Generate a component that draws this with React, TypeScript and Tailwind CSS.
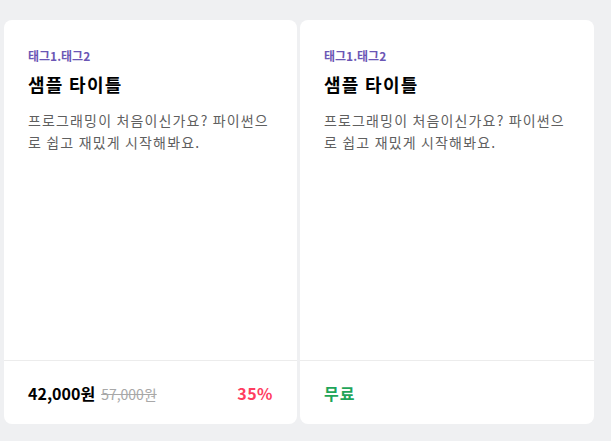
import React from "react";

type Card = {
  tags: string;
  title: string;
  desc: string;
  price?: string;
  original?: string;
  discount?: string;
  free?: boolean;
};

const cards: Card[] = [
  {
    tags: "태그1.태그2",
    title: "샘플 타이틀",
    desc: "프로그래밍이 처음이신가요? 파이썬으로 쉽고 재밌게 시작해봐요.",
    price: "42,000원",
    original: "57,000원",
    discount: "35%",
  },
  {
    tags: "태그1.태그2",
    title: "샘플 타이틀",
    desc: "프로그래밍이 처음이신가요? 파이썬으로 쉽고 재밌게 시작해봐요.",
    free: true,
  },
];

export default function App() {
  return (
    <div
      className="w-[611px] h-[441px] bg-[#eff0f2] pl-[4px] pt-[20px] flex gap-[3px]"
      style={{ fontFamily: '"Noto Sans CJK KR", "Noto Sans", sans-serif' }}
    >
      {cards.map((c, i) => (
        <div
          key={i}
          className={`${i === 0 ? "w-[293px]" : "w-[294px]"} h-[404px] bg-white rounded-[8px] flex flex-col`}
        >
          <div className="flex-1 pl-6 pr-[24px] pt-[27px]">
            <div className="text-[12px] leading-[18px] font-bold text-[#6b56b5]">{c.tags}</div>
            <div className="mt-[6px] text-[18px] leading-[26px] font-bold text-black tracking-[1.3px]">{c.title}</div>
            <div className="mt-[12px] text-[14px] leading-[22px] text-[#5f5f5f] break-all tracking-[1.15px]">{c.desc}</div>
          </div>
          <div className="h-[64px] border-t border-[#ececec] px-6 flex items-center justify-between">
            {c.free ? (
              <span className="text-[16px] font-bold text-[#1fa55a] tracking-[1px]">무료</span>
            ) : (
              <>
                <div className="flex items-baseline gap-[6px]">
                  <span className="text-[16px] font-bold text-black">{c.price}</span>
                  <span className="text-[14px] text-[#a8a8a8] line-through">{c.original}</span>
                </div>
                <span className="text-[16px] font-bold text-[#ff3d60] tracking-[0.5px]">{c.discount}</span>
              </>
            )}
          </div>
        </div>
      ))}
    </div>
  );
}
